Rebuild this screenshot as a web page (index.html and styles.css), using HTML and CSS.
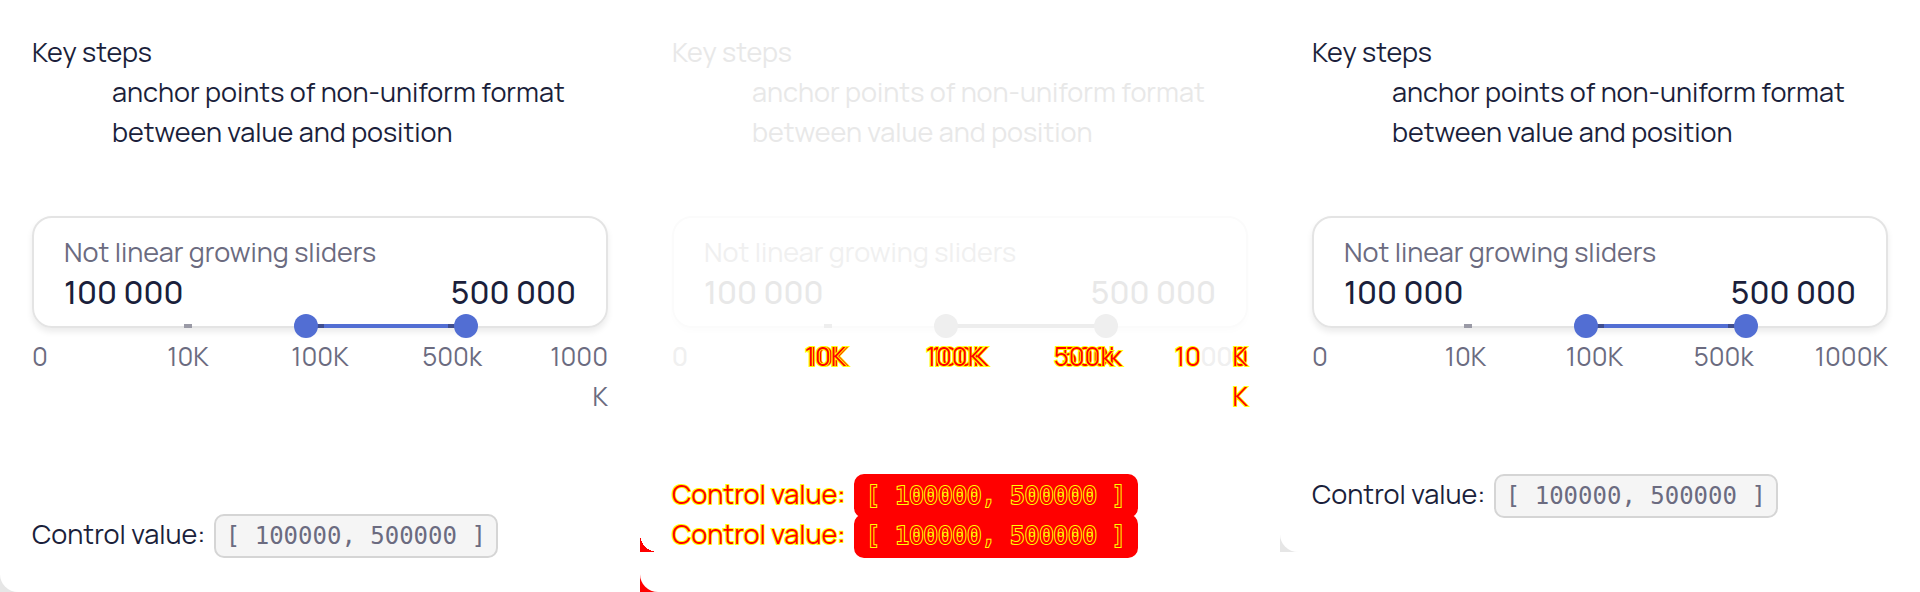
FILE: index.html
```html
<!DOCTYPE html>
<html lang="en">
<head>
<meta charset="utf-8">
<title>Slider key steps</title>
<link rel="stylesheet" href="styles.css">
</head>
<body>
<main class="compare">
  <section class="frame">
    <div class="panel">
      <dl class="intro"><dt>Key steps</dt><dd>anchor points of non-uniform format between value and position</dd></dl>
      <div class="field">
        <div class="card">
          <div class="label">Not linear growing sliders</div>
          <div class="values"><output>100&nbsp;000</output><output>500&nbsp;000</output></div>
        </div>
        <div class="slider">
          <span class="tick"></span><span class="bar"></span>
          <input class="range low" type="range" min="0" max="100" value="50" aria-label="From">
          <input class="range high" type="range" min="0" max="100" value="75" aria-label="To">
        </div>
        <div class="scale wrapped"><span>0</span><span>10K</span><span>100K</span><span>500k</span><span>1000<br>K</span></div>
      </div>
      <p class="result">Control value: <code>[ 100000, 500000 ]</code></p>
    </div>
  </section>

  <section class="frame diff">
    <div class="panel">
      <dl class="intro"><dt>Key steps</dt><dd>anchor points of non-uniform format between value and position</dd></dl>
      <div class="field">
        <div class="card">
          <div class="label">Not linear growing sliders</div>
          <div class="values"><output>100&nbsp;000</output><output>500&nbsp;000</output></div>
        </div>
        <div class="slider">
          <span class="tick"></span><span class="bar"></span>
          <input class="range low" type="range" min="0" max="100" value="50" aria-label="From">
          <input class="range high" type="range" min="0" max="100" value="75" aria-label="To">
        </div>
        <div class="overlay">
          <div class="scale wrapped"><span class="same">0</span><span>10K</span><span>100K</span><span>500k</span><span><span class="same">100</span>0<br>K</span></div>
          <div class="scale"><span class="same">0</span><span>10K</span><span>100K</span><span>500k</span><span>10<span class="same">00</span>K</span></div>
        </div>
      </div>
      <div class="results">
        <p class="result">Control value: <code>[ 100000, 500000 ]</code></p>
        <p class="result">Control value: <code>[ 100000, 500000 ]</code></p>
      </div>
    </div>
  </section>

  <section class="frame">
    <div class="panel">
      <dl class="intro"><dt>Key steps</dt><dd>anchor points of non-uniform format between value and position</dd></dl>
      <div class="field">
        <div class="card">
          <div class="label">Not linear growing sliders</div>
          <div class="values"><output>100&nbsp;000</output><output>500&nbsp;000</output></div>
        </div>
        <div class="slider">
          <span class="tick"></span><span class="bar"></span>
          <input class="range low" type="range" min="0" max="100" value="50" aria-label="From">
          <input class="range high" type="range" min="0" max="100" value="75" aria-label="To">
        </div>
        <div class="scale"><span>0</span><span>10K</span><span>100K</span><span>500k</span><span>1000K</span></div>
      </div>
      <p class="result">Control value: <code>[ 100000, 500000 ]</code></p>
    </div>
  </section>
</main>
</body>
</html>
```
FILE: styles.css
```css
* { box-sizing: border-box; }
body {
  margin: 0;
  background: #fff;
  color: #1b1f3b;
  font: 27px/40px Manrope, Inter, "Liberation Sans", sans-serif;
}
.compare {
  display: grid;
  grid-template-columns: repeat(3, minmax(0, 1fr));
  align-items: start;
}
.frame {
  --accent: #526ed3;
  --muted: #6b6b80;
  --line: #e4e4e4;
  --corner: #e6e6e6;
  position: relative;
  background: linear-gradient(to right, var(--corner) 32px, #fff 32px);
}
.panel {
  padding: 32px 32px 34px;
  background: #fff;
  border-bottom-left-radius: 18px;
}
.intro { margin: 0 0 64px; }
.intro dd { margin: 0 0 0 80px; }
.card {
  padding: 14px 30px;
  border: 2px solid var(--line);
  border-radius: 20px;
  box-shadow: 0 4px 6px rgba(0, 0, 0, .08);
}
.label { color: var(--muted); line-height: 40px; }
.values {
  display: flex;
  justify-content: space-between;
  font-size: 32px;
  font-weight: 500;
  line-height: 40px;
}
.slider {
  display: grid;
  grid-template-columns: minmax(0, 1fr);
  align-items: center;
  height: 24px;
  margin: -14px 0 -2px;
}
.slider > * { grid-area: 1 / 1; }
.tick { width: 8px; height: 4px; margin-left: calc(27% - 4px); background: #9a9aa6; }
.bar {
  height: 4px;
  margin: 0 25% 0 48%;
  background: linear-gradient(to right, #3f4e91 16px, var(--accent) 16px, var(--accent) calc(100% - 16px), #3f4e91 calc(100% - 16px));
}
.range {
  appearance: none;
  height: 24px;
  margin: 0;
  background: transparent;
  pointer-events: none;
}
.low { margin-right: 28px; }
.high { margin-left: 32px; }
.range::-webkit-slider-thumb {
  appearance: none;
  width: 24px;
  height: 24px;
  border: 0;
  border-radius: 50%;
  background: var(--accent);
  pointer-events: auto;
}
.scale {
  display: grid;
  grid-template-columns: 89fr 129fr 129fr 129fr 100fr;
  color: var(--muted);
  font-size: 26px;
  text-align: center;
}
.scale > :first-child { text-align: left; }
.scale > :last-child { text-align: right; }
.result { margin: 98px 0 0; }
.wrapped { height: 80px; grid-template-columns: 90fr 132fr 132fr 132fr 90fr; }
code {
  display: inline-block;
  margin-left: 3px;
  padding: 0 10px;
  border: 2px solid #d5d5d5;
  border-radius: 10px;
  background: #f5f5f5;
  color: var(--muted);
  font: 24px/40px "DejaVu Sans Mono", monospace;
}
.diff {
  --accent: #efefef;
  --muted: #f0f0f0;
  --line: #fbfbfb;
  --corner: #f00;
  color: #e8e8e8;
}
.diff::after {
  content: "";
  position: absolute;
  left: 0;
  bottom: 40px;
  width: 18px;
  height: 18px;
  background: radial-gradient(circle at 100% 0, transparent 18px, #f00 18px);
}
.diff .card { box-shadow: 0 4px 6px rgba(0, 0, 0, .01); }
.diff .tick { background: #eee; }
.diff .bar { background: #ededed; }
.overlay { display: grid; }
.overlay .scale { grid-area: 1 / 1; }
.overlay .scale, .diff .result, .diff code {
  color: #f00;
  -webkit-text-stroke: 2px #ff0;
  paint-order: stroke fill;
}
.overlay .same { color: #f0f0f0; -webkit-text-stroke: 0; }
.diff .results { margin-top: 58px; }
.diff .result { height: 40px; margin: 0; }
.diff .result:last-child { height: 44px; }
.diff code { border-color: #f00; background: #f00; }
```
